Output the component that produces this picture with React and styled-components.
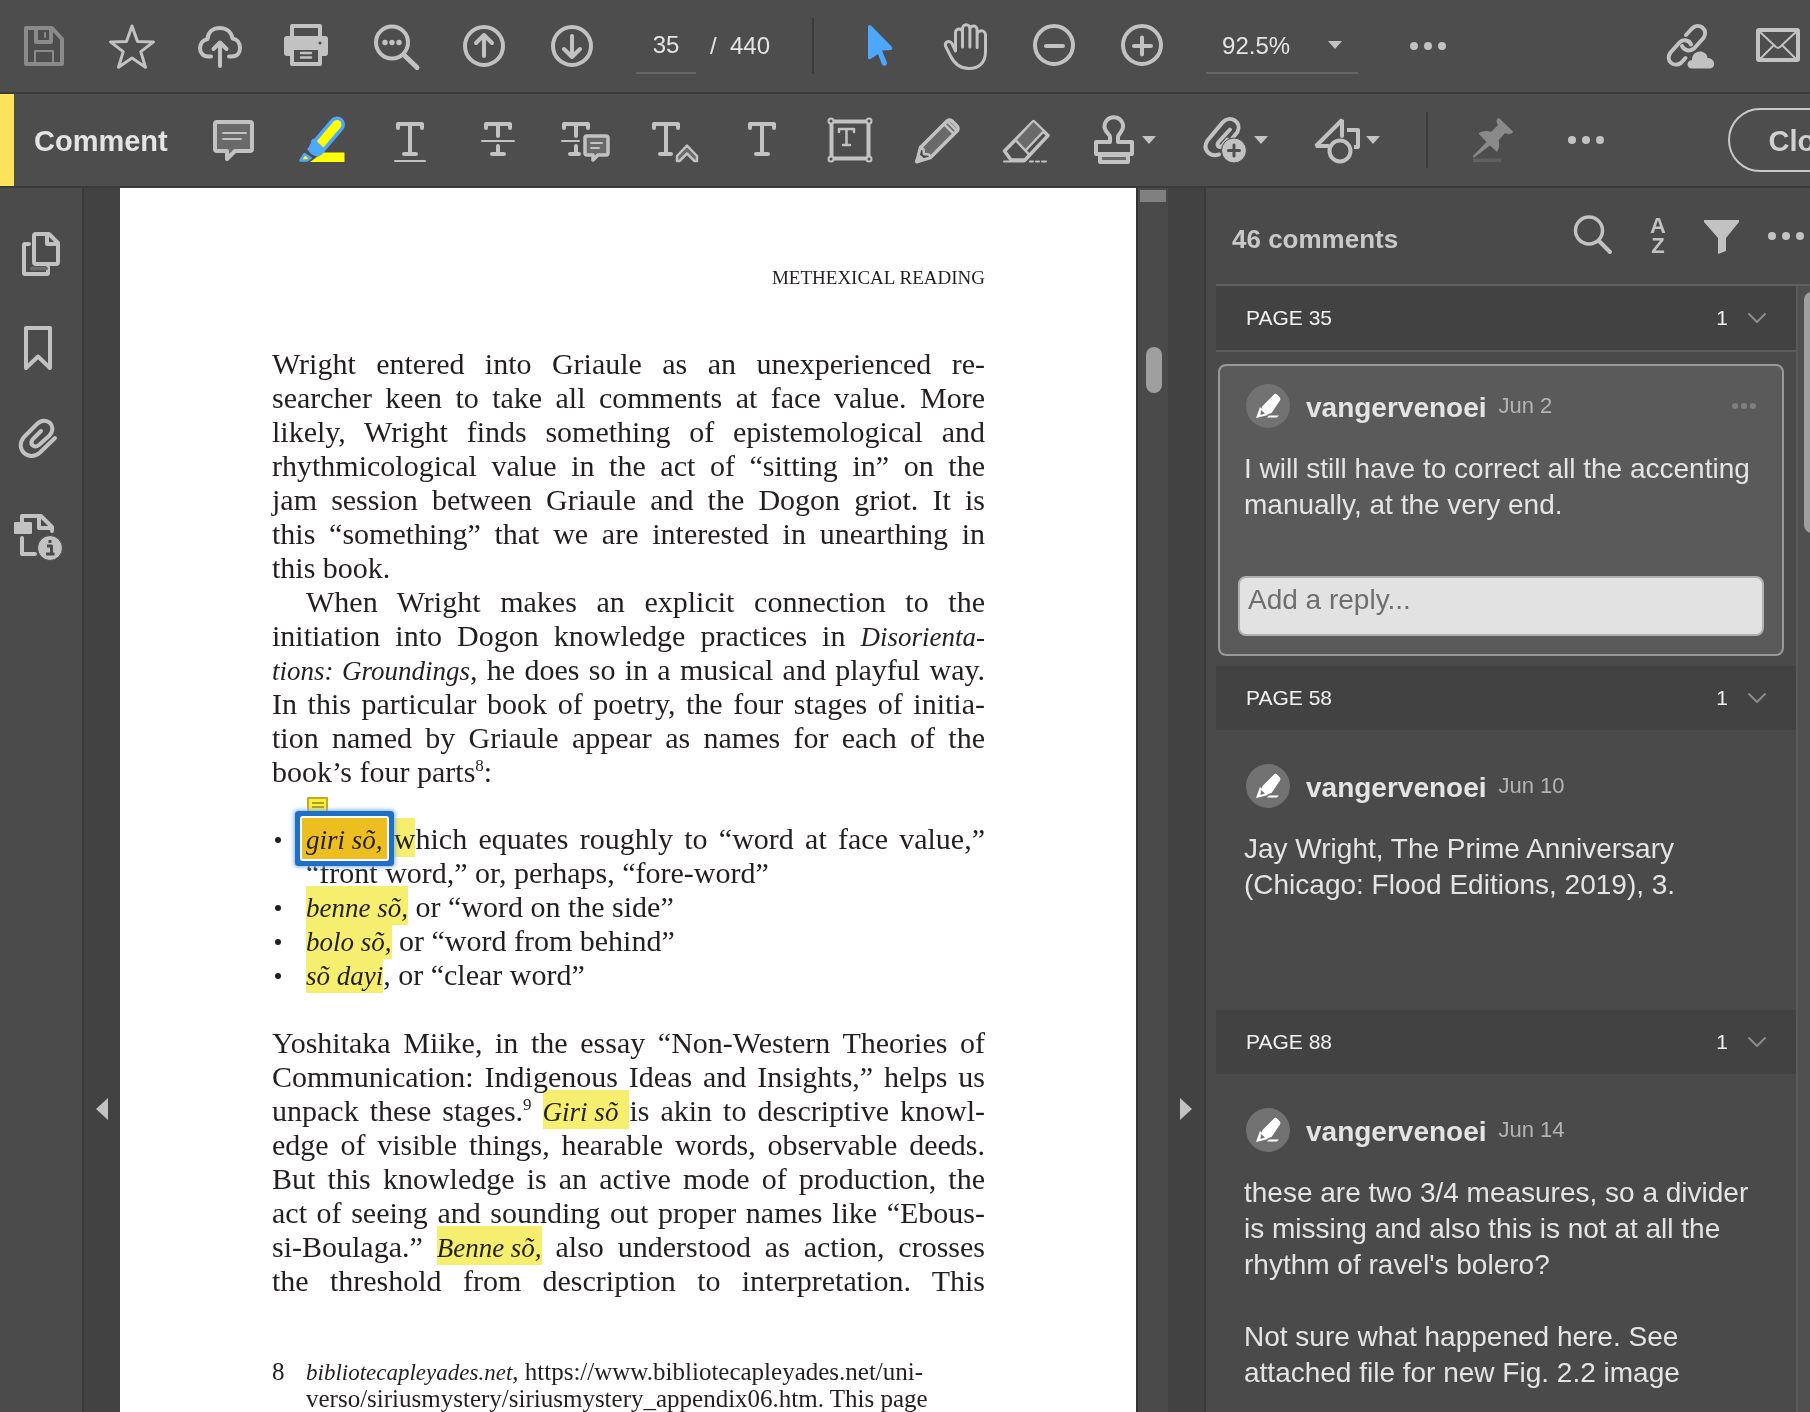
import React from "react";
import styled, { createGlobalStyle } from "styled-components";

const GlobalStyle = createGlobalStyle`
  * {
    box-sizing: border-box;
  }

  body {
    margin: 0;
    background: #4d4d4d;
    font-family: "Liberation Sans", Arial, sans-serif;
  }

  p, h1, h2, h3, ul {
    margin: 0;
    padding: 0;
    font-weight: normal;
  }

  button, input, select, textarea {
    margin: 0;
    padding: 0;
    border: none;
    background: none;
    color: inherit;
    font-family: inherit;
  }
`;

const Window = styled.div`
  display: flex;
  flex-direction: column;
  height: 100vh;
  overflow: hidden;
  color: #e4e4e4;
`;

/* toolbars */

const Toolbar = styled.header`
  display: flex;
  flex-direction: row;
  align-items: center;
  flex-shrink: 0;
  height: 94px;
  overflow: hidden;
  background: #4d4d4d;
  border-bottom: 2px solid #3a3a3a;
`;

const ToolButton = styled.button`
  display: flex;
  align-items: center;
  justify-content: center;
  flex-shrink: 0;
  width: ${(props) => props.$width || `88px`};
  height: 64px;
  cursor: pointer;
`;

const MenuToolButton = styled(ToolButton)`
  justify-content: flex-start;
  gap: 4px;
  width: 112px;
  padding-left: 20px;
`;

const Svg = styled.svg`
  display: block;
  flex-shrink: 0;
  overflow: visible;
  fill: none;
  stroke: ${(props) => props.$color || `#c2c2c2`};
  stroke-width: 4;
  stroke-linecap: round;
  stroke-linejoin: round;
`;

const Divider = styled.div`
  flex-shrink: 0;
  width: 2px;
  height: 56px;
  margin: 0 20px;
  background: #3a3a3a;
`;

const Spacer = styled.div`
  flex: 1;
`;

const PageForm = styled.form`
  display: flex;
  flex-direction: row;
  align-items: center;
  padding: 0 22px 0 20px;
  font-size: 24px;
`;

const PageInput = styled.input`
  width: 60px;
  height: 56px;
  border-bottom: 2px solid #666;
  font-size: 24px;
  text-align: center;
`;

const PageTotal = styled.span`
  padding-left: 14px;
  white-space: pre;
`;

const ZoomField = styled.label`
  display: flex;
  flex-direction: row;
  align-items: center;
  width: 152px;
  height: 56px;
  margin: 0 26px 0 20px;
  padding: 0 16px;
  border-bottom: 2px solid #666;
`;

const ZoomSelect = styled.select`
  flex: 1;
  appearance: none;
  font-size: 24px;
`;

const RightTools = styled.div`
  display: flex;
  flex-direction: row;
  gap: 24px;
`;

const BarAccent = styled.div`
  align-self: stretch;
  flex-shrink: 0;
  width: 14px;
  background: #fbe35c;
`;

const BarTitle = styled.h1`
  min-width: 176px;
  padding: 2px 0 0 20px;
  font-size: 29px;
  font-weight: bold;
`;

const CloseButton = styled.button`
  flex-shrink: 0;
  width: 160px;
  height: 64px;
  margin-right: -78px;
  padding-top: 2px;
  border: 2px solid #c8c8c8;
  border-radius: 32px;
  color: #d0d0d0;
  font-size: 29px;
  font-weight: bold;
  cursor: pointer;
`;

/* body */

const Body = styled.div`
  display: flex;
  flex-direction: row;
  flex: 1;
  min-height: 0;
`;

const Rail = styled.nav`
  display: flex;
  flex-direction: column;
  flex-shrink: 0;
  width: 84px;
  padding-top: 19px;
  background: #4b4b4b;
  border-right: 2px solid #3a3a3a;
`;

const RailButton = styled(ToolButton)`
  width: 82px;
  height: 94px;
`;

const Gutter = styled.div`
  flex-shrink: 0;
  width: ${(props) => props.$width || `36px`};
  padding-top: 910px;
  background: #424242;
  border-right: ${(props) => (props.$line ? `2px solid #3a3a3a` : `none`)};
`;

const GutterButton = styled.button`
  display: flex;
  justify-content: center;
  width: 100%;
  cursor: pointer;
`;

const Sheet = styled.main`
  flex: 1;
  min-width: 0;
  padding: 73px 151px 0 152px;
  overflow: hidden;
  background: #fff;
  color: #231f20;
  font-family: "Liberation Serif", "Times New Roman", serif;
  font-size: 30px;
  line-height: 34px;

  & i {
    font-size: 27px;
    line-height: 0;
  }
`;

const RunningHead = styled.h2`
  margin-bottom: 52px;
  font-size: 19px;
  text-align: right;
`;

const Paragraph = styled.p`
  white-space: nowrap;
`;

const Line = styled.span`
  display: block;
  padding-left: ${(props) => (props.$indent ? `34px` : `0`)};
  text-align: left;
  text-align-last: ${(props) => (props.$last ? `left` : `justify`)};
`;

const StageList = styled.ul`
  margin: 33px 0 34px;
  list-style: none;
  white-space: nowrap;
`;

const Stage = styled.li`
  position: relative;
  padding-left: 34px;

  &::before {
    content: "";
    position: absolute;
    top: 15px;
    left: 3px;
    width: 6px;
    height: 6px;
    border-radius: 50%;
    background: #231f20;
  }
`;

const Mark = styled.mark`
  padding: 4px 0 2px;
  background: #f5ee6e;
  color: inherit;
  mix-blend-mode: ${(props) => (props.$solid ? `normal` : `multiply`)};

  /* marked terms keep their own word gap in a justified line */
  & i {
    display: inline-block;
  }
`;

const SelectedMark = styled.span`
  position: relative;
  z-index: 1;
  margin: 0 -4px;
  padding: 4px;
  border-radius: 1px;
  background: #ecbe1f;
  box-shadow: 0 0 0 2px #fff, 0 0 0 7px #1f6fc6, 0 0 4px 8px #7fb0e4;
`;

const NoteIcon = styled.svg`
  position: absolute;
  top: -26px;
  left: 34px;
`;

const Sup = styled.sup`
  font-size: 17px;
  line-height: 0;
`;

const Footnote = styled.div`
  display: grid;
  grid-template-columns: 34px 1fr;
  margin-top: 60px;
  font-size: 25px;
  line-height: 27px;
  white-space: nowrap;

  & i {
    font-size: 23px;
  }
`;

const DocScroll = styled.div`
  flex-shrink: 0;
  width: 32px;
  background: #4a4a4a;
  border-left: 2px solid #333;
`;

const SplitHandle = styled.div`
  height: 12px;
  margin: 2px;
  background: #808080;
`;

const DocThumb = styled.div`
  width: 16px;
  height: 46px;
  margin: 145px 0 0 8px;
  border-radius: 8px;
  background: #9f9f9f;
`;

/* comments panel */

const Panel = styled.aside`
  display: flex;
  flex-direction: column;
  flex-shrink: 0;
  width: 604px;
  background: #4a4a4a;
`;

const PanelHeader = styled.div`
  display: flex;
  flex-direction: row;
  align-items: center;
  gap: 16px;
  flex-shrink: 0;
  height: 96px;
  padding-left: 26px;
`;

const PanelTitle = styled.h2`
  flex: 1;
  padding-top: 6px;
  color: #c9c9c9;
  font-size: 26px;
  font-weight: bold;
`;

const SortLabel = styled.span`
  color: #c2c2c2;
  font-size: 22px;
  font-weight: bold;
  line-height: 20px;
`;

const PanelBody = styled.div`
  display: flex;
  flex-direction: row;
  flex: 1;
  min-height: 0;
  margin-left: 10px;
  border-top: 2px solid #606060;
`;

const CommentList = styled.div`
  flex: 1;
  overflow: hidden;
`;

const ListScroll = styled.div`
  width: 14px;
  overflow: hidden;
  background: #505050;
  border-left: 2px solid #5a5a5a;
`;

const ListThumb = styled.div`
  width: 16px;
  height: 241px;
  margin: 6px 0 0 6px;
  border-radius: 8px;
  background: #9f9f9f;
`;

const GroupHeader = styled.button`
  display: flex;
  flex-direction: row;
  align-items: center;
  width: 100%;
  height: 66px;
  padding: 0 30px;
  border-bottom: 2px solid ${(props) => (props.$line ? `#5c5c5c` : `#4a4a4a`)};
  background: #424242;
  color: #f0f0f0;
  font-size: 21px;
  cursor: pointer;
`;

const GroupCount = styled.span`
  margin: 0 20px 0 auto;
`;

const Card = styled.article`
  margin: 12px 12px 10px 2px;
  padding: 18px 24px ${(props) => (props.$selected ? `18px` : `95px`)};
  border: 2px solid ${(props) => (props.$selected ? `#999` : `transparent`)};
  border-radius: 8px;
  background: ${(props) => (props.$selected ? `#5a5a5a` : `none`)};
`;

const CardHead = styled.div`
  display: flex;
  flex-direction: row;
  align-items: center;
  margin: 0 0 23px 2px;
`;

const Avatar = styled.svg`
  flex-shrink: 0;
  width: 44px;
  height: 44px;
  border-radius: 50%;
  background: #727272;
`;

const Author = styled.h3`
  padding: 4px 12px 0 16px;
  font-size: 28px;
  font-weight: bold;
`;

const CardDate = styled.time`
  color: #b4b4b4;
  font-size: 22px;
`;

const CardMenu = styled.button`
  margin: 0 2px 0 auto;
  cursor: pointer;
`;

const CardText = styled.p`
  font-size: 28px;
  line-height: 36px;
  white-space: pre-line;
`;

const ReplyBox = styled.textarea`
  display: block;
  width: calc(100% + 12px);
  height: 60px;
  margin: 53px -6px 0;
  padding: 6px 8px;
  border: 2px solid #b0b0b0;
  border-radius: 8px;
  background: #e2e2e2;
  color: #333;
  font-size: 28px;
  line-height: 32px;
  resize: none;

  &::placeholder {
    color: #6e6e6e;
    opacity: 1;
  }
`;

const Icon = ({ children, color }) => (
  <Svg width="48" height="48" viewBox="0 0 48 48" $color={color}>
    {children}
  </Svg>
);

const Dots = ({ r = 4, gap = 14, color = "#c2c2c2" }) => (
  <Svg width={gap * 2 + r * 2} height={r * 2} $color="none">
    {[0, 1, 2].map((n) => (
      <circle key={n} cx={r + gap * n} cy={r} r={r} fill={color} />
    ))}
  </Svg>
);

const Caret = () => (
  <Svg width="14" height="8" $color="none">
    <path d="M0 0h14L7 8z" fill="#c2c2c2" />
  </Svg>
);

const LetterT = "M12 12V8h24v4M24 8v30M18 38h12";

const icons = {
  save: (
    <Icon color="#8a8a8a">
      <path d="M6 6h26l10 11v25H6z" />
      <path d="M16 6v14h15V6" />
      <path d="M25 11v4" strokeWidth="2" />
      <path d="M15 42V29h18v13" strokeWidth="2" />
    </Icon>
  ),
  star: (
    <Icon>
      <path
        d="M24 4l5.500 15.500 16 .4-12.700 9.700 4.700 15.600L24 36 10.500 45.200l4.700-15.600L2.500 19.900l16-.4z"
        strokeWidth="3"
      />
    </Icon>
  ),
  upload: (
    <Icon>
      <path d="M15 34.500h-3C7 34.500 4 30.500 4 26s3-8 7.500-9C12 10 17 6 24 6s11.500 4.500 12.500 10.500C41 17 44 21 44 26s-3 8.500-8 8.500h-3" />
      <path d="M24 44V22M17.500 27l6.500-6.500 6.500 6.500" />
    </Icon>
  ),
  print: (
    <Icon>
      <path d="M8 18V4h28v14" />
      <rect x="0" y="14" width="44" height="20" rx="3" fill="#c2c2c2" stroke="none" />
      <rect x="8" y="26" width="28" height="16" fill="#4d4d4d" />
      <path d="M17 31h10M17 35.500h10" strokeWidth="2.500" />
      <circle cx="36" cy="21" r="1.500" fill="#4d4d4d" stroke="none" />
    </Icon>
  ),
  find: (
    <Icon>
      <circle cx="20" cy="20.500" r="16" />
      <path d="M32 33l13 12.500" strokeWidth="5" />
      <g fill="#c2c2c2" stroke="none">
        <circle cx="13" cy="20.500" r="2.700" />
        <circle cx="20" cy="20.500" r="2.700" />
        <circle cx="27" cy="20.500" r="2.700" />
      </g>
    </Icon>
  ),
  up: (
    <Icon>
      <circle cx="24" cy="24" r="19" />
      <path d="M24 34V13M16 21l8-8 8 8" />
    </Icon>
  ),
  down: (
    <Icon>
      <circle cx="24" cy="24" r="19" />
      <path d="M24 14v21M16 27l8 8 8-8" />
    </Icon>
  ),
  arrow: (
    <Icon color="none">
      <path
        d="M14 5q.5-3 3-1.500l21 21.500q1 2.500-1.500 3l-8.500.5 5 12q.5 2-1.500 3t-3.500-1L24 32l-7.500 5q-2 1-2.500-1z"
        fill="#4ea7ff"
      />
    </Icon>
  ),
  hand: (
    <Icon>
      <path
        d="M13.500 29V10.500a3.500 3.500 0 0 1 7 0V25V6.500a3.700 3.700 0 0 1 7.400 0V25V7.500a3.600 3.600 0 0 1 7.200 0V25.500V13a4.200 4.200 0 0 1 8.400 0V30c0 11-7 16.500-16.500 16.500C17 46.500 12 41 8.500 34L3.500 24c-1-4.500 4-6 6.500-2.500z"
        strokeWidth="3"
      />
    </Icon>
  ),
  minus: (
    <Icon>
      <circle cx="24" cy="23" r="19" />
      <path d="M16 24h17" />
    </Icon>
  ),
  plus: (
    <Icon>
      <circle cx="24" cy="23" r="19" />
      <path d="M16 24h17M24 15.500v17" />
    </Icon>
  ),
  share: (
    <Icon>
      <path d="M20 13l6-6.500c7-6.500 17 1 11.500 9.500L28 26.500c-4 3.500-10 2-12-2.500" />
      <path d="M25 22.500c-1.500-4.500-7.500-5.500-11-2.500L4.500 30.500c-5.500 8 3 15.500 10.500 10.500l4.500-5" />
      <path
        d="M26 46.500c-6 0-6-8 0-8.500 0-11 15-11 15.500-2 8 0 9 10.500 2 10.500z"
        fill="#c2c2c2"
        stroke="#4d4d4d"
        strokeWidth="2"
        paintOrder="stroke"
      />
    </Icon>
  ),
  mail: (
    <Icon>
      <rect x="4" y="8" width="40" height="30" rx="1" />
      <path d="M5 9l17 16q2 1.500 4 0L43 9M5 38l14-14M43 38L29 24" strokeWidth="2" />
    </Icon>
  ),
  note: (
    <Icon>
      <path d="M7 6h33q2 0 2 2v25q0 2-2 2H25l-8 8v-8H7q-2 0-2-2V8q0-2 2-2z" fill="#6a6a6a" />
      <path d="M13 17h23M13 23h18" strokeWidth="2" />
    </Icon>
  ),
  highlight: (
    <Icon>
      <path d="M12 46l13-9.500h21.500V46z" fill="#ff0" stroke="none" />
      <path d="M39 8.500L19 32" stroke="#4ea7ff" strokeWidth="16" />
      <path d="M13 38l-4-5 5-5 11 9-5 4z" fill="#4ea7ff" stroke="none" />
      <path d="M39 8.500L22 28.500" stroke="#ff0" strokeWidth="9" />
      <path d="M15.500 25.500l9 8.500" stroke="#4ea7ff" strokeWidth="5" />
      <path d="M2.500 44.500l4-6.500 6 4-3.500 2.500z" fill="#ff0" stroke="#4ea7ff" strokeWidth="2.500" />
    </Icon>
  ),
  underline: (
    <Icon>
      <path d={LetterT} />
      <path d="M9 45h30" strokeWidth="2" />
    </Icon>
  ),
  strike: (
    <Icon>
      <path d="M12 12V8h24v4M24 8v12M24 30v8M18 38h12" />
      <path d="M8 25h32" strokeWidth="2" />
    </Icon>
  ),
  replace: (
    <Icon>
      <path d="M2 12V8h24v4M14 8v12M14 30v8M8 38h9" />
      <path d="M0 25h17" strokeWidth="2" />
      <path d="M25 20h19q2 0 2 2v15q0 2-2 2H36l-5 5v-5h-6q-2 0-2-2V22q0-2 2-2z" fill="#6a6a6a" strokeWidth="3.500" />
      <path d="M29 27h11M29 32h8" strokeWidth="2" />
    </Icon>
  ),
  insert: (
    <Icon>
      <path d="M4 12V8h24v4M16 8v30M10 38h11" />
      <path d="M27 45v-5l10-10.500L47 40v5h-2.500L37 37.500 29.500 45z" fill="#6a6a6a" strokeWidth="2.500" />
    </Icon>
  ),
  text: (
    <Icon>
      <path d={LetterT} />
    </Icon>
  ),
  textBox: (
    <Icon>
      <rect x="5.500" y="5.500" width="37" height="37" />
      <path d="M13 16v-3h15v3M20.500 13v16M17 29h7" strokeWidth="2.500" />
      {[5, 43].map((x) =>
        [5, 43].map((y) => (
          <circle key={`${x}-${y}`} cx={x} cy={y} r="2.500" fill="#4d4d4d" strokeWidth="2" />
        ))
      )}
    </Icon>
  ),
  pencil: (
    <Icon>
      <path d="M3 45.500l3.500-14L33 5q2.500-2 5 0l5 5q2 2.500 0 5L16.500 41.500z" fill="#6a6a6a" strokeWidth="3.500" />
      <path d="M3 45.500L6.500 31.500l3 1.500.5 5 5 .5 1.500 3z" fill="#4d4d4d" strokeWidth="2.500" />
      <path d="M30.500 8.500l9 9M34 6l8 8" strokeWidth="2.500" />
      <path d="M3 45.500l2-5 3 3z" fill="#c2c2c2" />
    </Icon>
  ),
  eraser: (
    <Icon>
      <path d="M31.500 5.500L46 19.500 23 44H9l-6.500-9z" fill="#4d4d4d" strokeWidth="3.500" />
      <path d="M31.500 6l9.500 9.500L23 34l-9-9z" fill="#6a6a6a" stroke="none" />
      <path d="M14 24.500l13 14M41 16L23.500 34.500" strokeWidth="2.500" />
      <path d="M2 45.500h20M28 45.500h3M34 45.500h3M40 45.500h4" strokeWidth="2" />
    </Icon>
  ),
  stamp: (
    <Icon>
      <path d="M20 26v-5c0-3-5.500-5-5.500-10.500a9.300 9.300 0 0 1 18.600 0C33 16 28 18 28 21v5h14v12H6V26z" />
      <path d="M10 39v7h28v-7z" fill="#6a6a6a" />
    </Icon>
  ),
  attach: (
    <Icon>
      <path d="M17 38.500C7 41.500 0 33 5.500 24.500L20.500 6.500c7-8 20-1 15 9.500l-5 6M28 13.500L16.500 26c-2.500 4 1 6.500 4 3.500l5-6" />
      <circle cx="32" cy="34.500" r="12.500" fill="#c2c2c2" stroke="#4d4d4d" strokeWidth="1" />
      <path d="M32 29v11M26.500 34.500h11" stroke="#4d4d4d" strokeWidth="3" />
    </Icon>
  ),
  shapes: (
    <Icon>
      <path d="M14 30H2L28 4v16" strokeLinejoin="bevel" />
      <path d="M33 14h11v17h-4" strokeLinecap="butt" />
      <circle cx="26" cy="35" r="10.500" />
    </Icon>
  ),
  pin: (
    <Icon color="none">
      <path
        d="M31 2c-3 .5-3 4-1 7l-7 7c-4-2-10-1-12.500 1.500l8 8.500L5 40l.5 2L22 29.500l7 6.500c2-3 3-8 1.500-11.500L37 17c3 1.500 7 1.500 8-1.500z"
        fill="#8a8a8a"
      />
      <path d="M5 42.500h28v3.500H5z" fill="#606060" />
    </Icon>
  ),
  pages: (
    <Icon>
      <path d="M12 14H8q-1 0-1 1v28q0 1 1 1h22q1 0 1-1v-6" />
      <path d="M15 38.500h14" stroke="#6a6a6a" />
      <path d="M19 4h13l9 9v19q0 2-2 2H19q-2 0-2-2V6q0-2 2-2z" fill="#4b4b4b" />
      <path d="M30 4v10h11" />
    </Icon>
  ),
  bookmark: (
    <Icon>
      <path d="M9 4h24v40L21 32.500 9 44z" />
    </Icon>
  ),
  clip: (
    <Icon>
      <path d="M38 20L23 34.500c-11 10-26-3.500-16-15.500L20 6c9-9 21 2 12.500 11.500L22 27c-5.500 4-10-1.500-6-6l8-8" />
    </Icon>
  ),
  docInfo: (
    <Icon>
      <path d="M5 10V4h19l11 11v4M22 4v12h13M5 26v16h13" />
      <rect x="-3" y="10" width="18" height="12" rx="1" fill="#c2c2c2" stroke="none" />
      <circle cx="33" cy="36" r="12.500" fill="#c2c2c2" stroke="#4b4b4b" strokeWidth="1" />
      <g stroke="#4b4b4b" strokeWidth="3" strokeLinecap="butt">
        <path d="M30 34h4.500v8M29 42h8.500M31.500 29.500h3" />
      </g>
    </Icon>
  ),
  search: (
    <Icon>
      <circle cx="19" cy="18.500" r="13.500" strokeWidth="3.500" />
      <path d="M29 29l11 11" />
    </Icon>
  ),
  filter: (
    <Icon color="none">
      <path d="M6 8h35v2L28 26v13l-8 3V26L6 10z" fill="#c2c2c2" />
    </Icon>
  ),
};

const FILE_TOOLS = [
  ["Save", icons.save],
  ["Star", icons.star],
  ["Upload", icons.upload],
  ["Print", icons.print],
  ["Find text", icons.find],
  ["Previous page", icons.up],
  ["Next page", icons.down],
];

const VIEW_TOOLS = [
  ["Select", icons.arrow],
  ["Pan", icons.hand],
  ["Zoom out", icons.minus],
  ["Zoom in", icons.plus],
];

const COMMENT_TOOLS = [
  ["Sticky note", icons.note],
  ["Highlight text", icons.highlight],
  ["Underline text", icons.underline],
  ["Strikethrough text", icons.strike],
  ["Replace text", icons.replace],
  ["Insert text", icons.insert],
  ["Add text", icons.text],
  ["Text box", icons.textBox],
  ["Draw", icons.pencil],
  ["Erase", icons.eraser],
];

const MENU_TOOLS = [
  ["Stamp", icons.stamp],
  ["Attach", icons.attach],
  ["Shapes", icons.shapes],
];

const RAIL_TOOLS = [
  ["Page thumbnails", icons.pages],
  ["Bookmarks", icons.bookmark],
  ["Attachments", icons.clip],
  ["Document info", icons.docInfo],
];

const FIRST_PARAGRAPH = [
  "Wright entered into Griaule as an unexperienced re-",
  "searcher keen to take all comments at face value. More",
  "likely, Wright finds something of epistemological and",
  "rhythmicological value in the act of “sitting in” on the",
  "jam session between Griaule and the Dogon griot. It is",
  "this “something” that we are interested in unearthing in",
  "this book.",
];

const SECOND_PARAGRAPH = [
  "When Wright makes an explicit connection to the",
  <>
    initiation into Dogon knowledge practices in <i>Disorienta-</i>
  </>,
  <>
    <i>tions: Groundings</i>, he does so in a musical and playful way.
  </>,
  "In this particular book of poetry, the four stages of initia-",
  "tion named by Griaule appear as names for each of the",
  <>
    book’s four parts<Sup>8</Sup>:
  </>,
];

const THIRD_PARAGRAPH = [
  "Yoshitaka Miike, in the essay “Non-Western Theories of",
  "Communication: Indigenous Ideas and Insights,” helps us",
  <>
    unpack these stages.<Sup>9</Sup>{" "}
    <Mark>
      <i>Giri sõ</i>{" "}
    </Mark>
    is akin to descriptive knowl-
  </>,
  "edge of visible things, hearable words, observable deeds.",
  "But this knowledge is an active mode of production, the",
  "act of seeing and sounding out proper names like “Ebous-",
  <>
    si-Boulaga.”{" "}
    <Mark>
      <i>Benne sõ,</i>
    </Mark>{" "}
    also understood as action, crosses
  </>,
  "the threshold from description to interpretation. This",
];

const COMMENTS = [
  {
    page: 35,
    author: "vangervenoei",
    date: "Jun 2",
    text: "I will still have to correct all the accenting manually, at the very end.",
    selected: true,
  },
  {
    page: 58,
    author: "vangervenoei",
    date: "Jun 10",
    text: "Jay Wright, The Prime Anniversary (Chicago: Flood Editions, 2019), 3.",
  },
  {
    page: 88,
    author: "vangervenoei",
    date: "Jun 14",
    text: "these are two 3/4 measures, so a divider is missing and also this is not at all the rhythm of ravel's bolero?\n\nNot sure what happened here. See attached file for new Fig. 2.2 image",
  },
];

const Tools = ({ items }) =>
  items.map(([label, icon]) => (
    <ToolButton key={label} type="button" aria-label={label}>
      {icon}
    </ToolButton>
  ));

const Lines = ({ lines, indent, open }) => (
  <Paragraph>
    {lines.map((line, idx) => (
      <Line
        key={idx}
        $indent={indent && idx === 0}
        $last={!open && idx === lines.length - 1}
      >
        {line}
      </Line>
    ))}
  </Paragraph>
);

const MainToolbar = () => (
  <Toolbar>
    <Tools items={FILE_TOOLS} />
    <PageForm>
      <PageInput type="text" aria-label="Page number" defaultValue="35" />
      <PageTotal>/  440</PageTotal>
    </PageForm>
    <Divider />
    <Tools items={VIEW_TOOLS} />
    <ZoomField>
      <ZoomSelect aria-label="Zoom level" defaultValue="92.5%">
        <option>92.5%</option>
      </ZoomSelect>
      <Caret />
    </ZoomField>
    <ToolButton type="button" aria-label="More tools">
      <Dots />
    </ToolButton>
    <Spacer />
    <RightTools>
      <ToolButton type="button" aria-label="Share link" $width={`64px`}>
        {icons.share}
      </ToolButton>
      <ToolButton type="button" aria-label="Send by mail" $width={`64px`}>
        {icons.mail}
      </ToolButton>
    </RightTools>
  </Toolbar>
);

const CommentToolbar = () => (
  <Toolbar as="section">
    <BarAccent />
    <BarTitle>Comment</BarTitle>
    <Tools items={COMMENT_TOOLS} />
    {MENU_TOOLS.map(([label, icon]) => (
      <MenuToolButton key={label} type="button" aria-label={label}>
        {icon}
        <Caret />
      </MenuToolButton>
    ))}
    <Divider />
    <ToolButton type="button" aria-label="Keep tool selected">
      {icons.pin}
    </ToolButton>
    <ToolButton type="button" aria-label="More comment tools" $width={`100px`}>
      <Dots />
    </ToolButton>
    <Spacer />
    <CloseButton type="button">Close</CloseButton>
  </Toolbar>
);

const DocumentPage = () => (
  <Sheet>
    <RunningHead>METHEXICAL READING</RunningHead>
    <Lines lines={FIRST_PARAGRAPH} />
    <Lines lines={SECOND_PARAGRAPH} indent />
    <StageList>
      <Stage>
        <NoteIcon width="24" height="24" viewBox="0 0 24 24">
          <path
            d="M2 2h19v16H9l-4 4v-4H2z"
            fill="#f7f03c"
            stroke="#c9a81c"
            strokeWidth="2"
            strokeLinejoin="round"
          />
          <path d="M6 7h12M6 11h12" stroke="#b39a2a" strokeWidth="2" />
        </NoteIcon>
        <Line>
          <Mark $solid>
            <SelectedMark>
              <i>giri sõ,</i>
            </SelectedMark>{" "}
            w
          </Mark>
          hich equates roughly to “word at face value,”
        </Line>
        <Line $last>“front word,” or, perhaps, “fore-word”</Line>
      </Stage>
      <Stage>
        <Mark $solid>
          <i>benne sõ,</i>
        </Mark>{" "}
        or “word on the side”
      </Stage>
      <Stage>
        <Mark $solid>
          <i>bolo sõ,</i>
        </Mark>{" "}
        or “word from behind”
      </Stage>
      <Stage>
        <Mark $solid>
          <i>sõ dayi</i>
        </Mark>
        , or “clear word”
      </Stage>
    </StageList>
    <Lines lines={THIRD_PARAGRAPH} open />
    <Footnote>
      <span>8</span>
      <p>
        <i>bibliotecapleyades.net</i>, https://www.bibliotecapleyades.net/uni-
        <br />
        verso/siriusmystery/siriusmystery_appendix06.htm. This page
      </p>
    </Footnote>
  </Sheet>
);

const CommentCard = ({ comment }) => (
  <Card $selected={comment.selected}>
    <CardHead>
      <Avatar viewBox="0 0 44 44" aria-hidden="true">
        <path
          d="M27.500 11q1.500-2 3.500-.5l2.500 2.500q1.500 1.500.5 3.500L25.500 29l-5.500 2-5-5 1.500-4z"
          fill="#fff"
        />
        <path d="M14 23l8 8-12 3z" fill="#fff" />
        <path d="M15 26l4 3.500-4.500 1.500z" fill="#727272" />
        <path d="M21 33.500l2-2h10l-2 2z" fill="#fff" />
      </Avatar>
      <Author>{comment.author}</Author>
      <CardDate>{comment.date}</CardDate>
      {comment.selected && (
        <CardMenu type="button" aria-label="Comment options">
          <Dots r={3} gap={9} color="#808080" />
        </CardMenu>
      )}
    </CardHead>
    <CardText>{comment.text}</CardText>
    {comment.selected && (
      <ReplyBox aria-label="Reply" placeholder="Add a reply..." />
    )}
  </Card>
);

const CommentsPanel = () => (
  <Panel>
    <PanelHeader>
      <PanelTitle>46 comments</PanelTitle>
      <ToolButton type="button" aria-label="Search comments" $width={`48px`}>
        {icons.search}
      </ToolButton>
      <ToolButton type="button" aria-label="Sort comments" $width={`48px`}>
        <SortLabel>
          A<br />Z
        </SortLabel>
      </ToolButton>
      <ToolButton type="button" aria-label="Filter comments" $width={`48px`}>
        {icons.filter}
      </ToolButton>
      <ToolButton type="button" aria-label="Panel options" $width={`48px`}>
        <Dots />
      </ToolButton>
    </PanelHeader>
    <PanelBody>
      <CommentList>
        {COMMENTS.map((comment, idx) => (
          <section key={comment.page}>
            <GroupHeader type="button" $line={idx === 0}>
              PAGE {comment.page}
              <GroupCount>1</GroupCount>
              <Svg width="18" height="9" viewBox="0 0 18 9" $color="#8c8c8c">
                <path d="M1 0l8 8 8-8" strokeWidth="2" />
              </Svg>
            </GroupHeader>
            <CommentCard comment={comment} />
          </section>
        ))}
      </CommentList>
      <ListScroll>
        <ListThumb />
      </ListScroll>
    </PanelBody>
  </Panel>
);

const App = () => {
  return (
    <>
      <GlobalStyle />
      <Window>
        <MainToolbar />
        <CommentToolbar />
        <Body>
          <Rail>
            {RAIL_TOOLS.map(([label, icon]) => (
              <RailButton key={label} type="button" aria-label={label}>
                {icon}
              </RailButton>
            ))}
          </Rail>
          <Gutter>
            <GutterButton type="button" aria-label="Open navigation pane">
              <Svg width="12" height="22" $color="none">
                <path d="M12 0v22L0 11z" fill="#c2c2c2" />
              </Svg>
            </GutterButton>
          </Gutter>
          <DocumentPage />
          <DocScroll>
            <SplitHandle />
            <DocThumb />
          </DocScroll>
          <Gutter $width={`38px`} $line>
            <GutterButton type="button" aria-label="Hide comments pane">
              <Svg width="12" height="22" $color="none">
                <path d="M0 0v22l12-11z" fill="#c2c2c2" />
              </Svg>
            </GutterButton>
          </Gutter>
          <CommentsPanel />
        </Body>
      </Window>
    </>
  );
};

export default App;
